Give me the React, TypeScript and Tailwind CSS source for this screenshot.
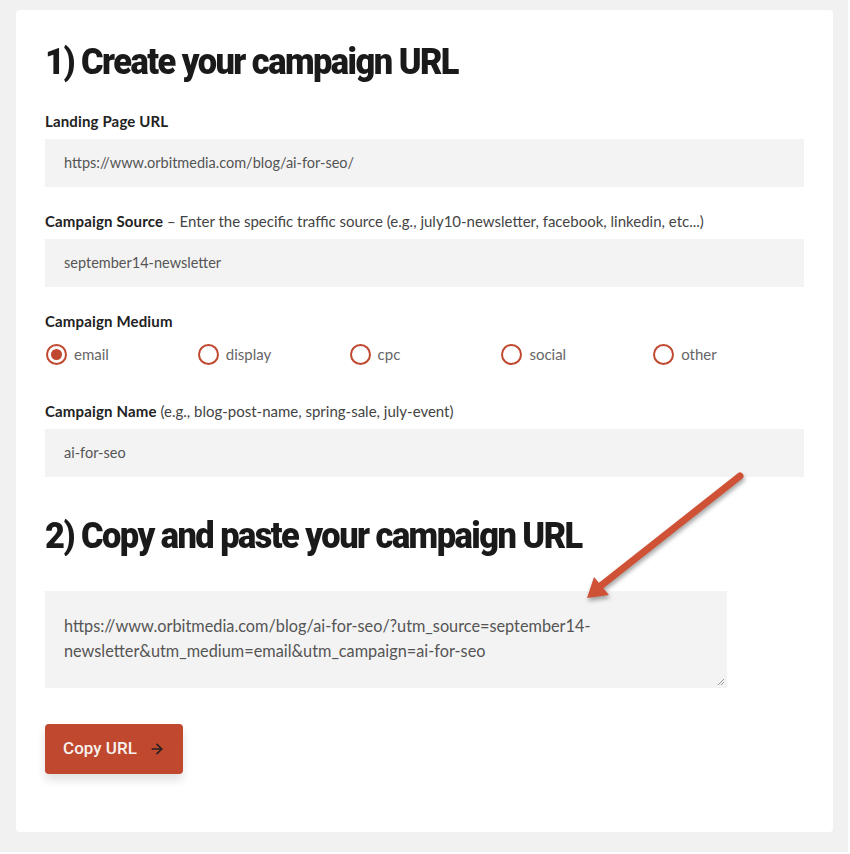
import { ArrowRight } from "lucide-react";

const mediums = ["email", "display", "cpc", "social", "other"];

const body = { fontFamily: "Lato, 'Open Sans', sans-serif" };
const head = { fontFamily: "Roboto, 'Liberation Sans', sans-serif" };

function Field({ value }: { value: string }) {
  return (
    <div className="mt-2 h-12 bg-[#f3f3f3] px-[19px] flex items-center text-[14.5px] text-[#555]">
      {value}
    </div>
  );
}

export default function App() {
  return (
    <div className="relative w-[850px] h-[854px] bg-white" style={body}>
      <div className="w-[848px] h-[852px] pt-[10px] pl-4 bg-[#f1f1f1]">
        <div className="w-[817px] h-[822px] bg-white rounded-[4px] pt-[30px] pl-[29px] pr-[29px]">
          <h1
            className="origin-left scale-x-[0.93] whitespace-nowrap text-[37px] leading-[44px] font-black text-[#1a1a1a] tracking-[-0.045em]"
            style={head}
          >
            1) Create your campaign URL
          </h1>

          <div className="mt-[27px] text-[15px] leading-5 font-bold text-[#222] tracking-[0.01em]">Landing Page URL</div>
          <Field value="https://www.orbitmedia.com/blog/ai-for-seo/" />

          <div className="mt-6 text-[15px] leading-5 text-[#444]">
            <span className="font-bold text-[#222] tracking-[0.01em]">Campaign Source</span> – Enter the specific traffic source
            (e.g., july10-newsletter, facebook, linkedin, etc...)
          </div>
          <Field value="september14-newsletter" />

          <div className="mt-6 text-[15px] leading-5 font-bold text-[#222] tracking-[0.01em]">Campaign Medium</div>
          <div className="mt-[11px] grid grid-cols-5">
            {mediums.map((m, i) => (
              <label key={m} className="flex items-center gap-[7px] h-6 pl-px">
                <span className="w-[21px] h-[21px] rounded-full border-2 border-[#c0482e] flex items-center justify-center">
                  {i === 0 && <span className="w-[11px] h-[11px] rounded-full bg-[#c0482e]" />}
                </span>
                <span className="text-[15px] text-[#666]">{m}</span>
              </label>
            ))}
          </div>

          <div className="mt-[35px] text-[15px] leading-5 text-[#444]">
            <span className="font-bold text-[#222] tracking-[0.01em]">Campaign Name</span> (e.g., blog-post-name, spring-sale,
            july-event)
          </div>
          <Field value="ai-for-seo" />

          <h2
            className="mt-[37px] origin-left scale-x-[0.93] whitespace-nowrap text-[37px] leading-[44px] font-black text-[#1a1a1a] tracking-[-0.045em]"
            style={head}
          >
            2) Copy and paste your campaign URL
          </h2>

          <div className="relative mt-[33px] w-[682px] h-[97px] bg-[#f3f3f3] pt-[22px] px-[19px] text-[16.3px] leading-[25px] text-[#555]">
            https://www.orbitmedia.com/blog/ai-for-seo/?utm_source=september14-
            <br />
            newsletter&amp;utm_medium=email&amp;utm_campaign=ai-for-seo
            <svg className="absolute right-[2px] bottom-[2px]" width="8" height="8" viewBox="0 0 8 8">
              <path d="M7 1 L1 7 M7 4 L4 7" stroke="#999" strokeWidth="1" />
            </svg>
          </div>

          <button
            className="mt-9 w-[138px] h-[50px] rounded-[4px] bg-[#c0482e] shadow-[0_6px_10px_rgba(0,0,0,0.12)] flex items-center justify-center gap-3 text-[17px] font-medium text-[#f7f1ee]"
            style={head}
          >
            Copy URL
            <ArrowRight size={16} strokeWidth={2.5} className="text-[#222]" />
          </button>
        </div>
      </div>

      <svg
        className="absolute left-0 top-0 pointer-events-none"
        width="850"
        height="854"
        style={{ filter: "drop-shadow(1px 3px 2px rgba(0,0,0,0.35))" }}
      >
        <line x1="740" y1="476" x2="598" y2="588" stroke="#cf5236" strokeWidth="7" strokeLinecap="round" />
        <polygon points="587,598 594,577 609,595" fill="#cf5236" />
      </svg>
    </div>
  );
}
